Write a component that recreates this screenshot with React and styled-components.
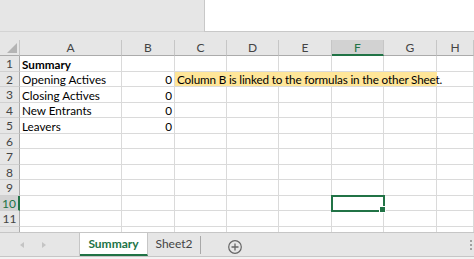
import styled, { createGlobalStyle } from "styled-components";

const GREEN = "#217346";
const GRID = "#dadada";
const HEAD_BG = "#e6e6e6";

const Global = createGlobalStyle`
  html, body { margin: 0; padding: 0; background: #ffffff; }
  body { font-family: Lato, "Liberation Sans", sans-serif; }
`;

const Window = styled.div`
  width: 474px;
  height: 259px;
  overflow: hidden;
  display: flex;
  flex-direction: column;
  background: ${HEAD_BG};
`;

const TopBar = styled.div`
  height: 40px;
  display: flex;
  align-items: flex-start;
`;

const TopFill = styled.div`
  width: 204px;
  height: 32px;
  border-bottom: 1px solid #d4d4d4;
  box-sizing: border-box;
`;

const NameBox = styled.div`
  flex: 1;
  height: 32px;
  background: #ffffff;
  border-left: 1px solid #c8c8c8;
  border-bottom: 1px solid #c8c8c8;
  box-sizing: border-box;
`;

const Sheet = styled.div`
  height: 192px;
  overflow: hidden;
  display: grid;
  grid-template-columns: 20px 102px 53px 52px 52px 53px 52px 53px 1fr;
  grid-template-rows: 16px repeat(6, 16px 15px);
  background: #ffffff;
`;

const ColHead = styled.div`
  display: flex;
  align-items: center;
  justify-content: center;
  font-size: 12px;
  color: ${(p) => (p.$active ? GREEN : "#444")};
  background: ${(p) => (p.$active ? "#d2d2d2" : HEAD_BG)};
  border-right: 1px solid #c6c6c6;
  border-bottom: ${(p) => (p.$active ? `2px solid ${GREEN}` : "1px solid #ababab")};
  box-sizing: border-box;
`;

const Corner = styled.div`
  background: ${HEAD_BG};
  border-right: 1px solid #c6c6c6;
  border-bottom: 1px solid #ababab;
  box-sizing: border-box;
  position: relative;
  &::after {
    content: "";
    position: absolute;
    right: 2px;
    bottom: 2px;
    border-style: solid;
    border-width: 0 0 10px 10px;
    border-color: transparent transparent #b4b4b4 transparent;
  }
`;

const RowHead = styled.div`
  display: flex;
  align-items: center;
  justify-content: center;
  font-size: 12px;
  color: ${(p) => (p.$active ? GREEN : "#444")};
  background: ${(p) => (p.$active ? "#d2d2d2" : HEAD_BG)};
  border-right: ${(p) => (p.$active ? `2px solid ${GREEN}` : "1px solid #ababab")};
  border-bottom: 1px solid #d0d0d0;
  box-sizing: border-box;
`;

const Cell = styled.div`
  display: flex;
  align-items: center;
  justify-content: ${(p) => (p.$num ? "flex-end" : "flex-start")};
  padding: 0 2px;
  font-size: 11.7px;
  font-weight: ${(p) => (p.$bold ? 700 : 400)};
  color: #000;
  white-space: nowrap;
  border-right: 1px solid ${GRID};
  border-bottom: 1px solid ${GRID};
  box-sizing: border-box;
  position: relative;
  ${(p) =>
    p.$selected &&
    `
    outline: 2px solid ${GREEN};
    outline-offset: -1px;
    z-index: 1;
    &::after {
      content: "";
      position: absolute;
      right: -3px;
      bottom: -3px;
      width: 5px;
      height: 5px;
      background: ${GREEN};
      border: 1px solid #fff;
    }
  `}
`;

const NoteCell = styled(Cell)`
  grid-column: 4 / span 6;
  letter-spacing: -0.15px;
  background: linear-gradient(to right, #ffe699 0, #ffe699 262px, #ffffff 262px);
`;

const TabBar = styled.div`
  height: 23px;
  display: flex;
  align-items: stretch;
  background: ${HEAD_BG};
  border-top: 1px solid #c6c6c6;
  border-bottom: 1px solid #c6c6c6;
`;

const Nav = styled.div`
  width: 80px;
  display: flex;
  align-items: center;
  gap: 18px;
  padding-left: 20px;
  box-sizing: border-box;
  border-right: 1px solid #c6c6c6;
`;

const Arrow = styled.span`
  width: 0;
  height: 0;
  border-top: 3px solid transparent;
  border-bottom: 3px solid transparent;
  ${(p) =>
    p.$dir === "left"
      ? "border-right: 4px solid #c4c4c4;"
      : "border-left: 4px solid #c4c4c4;"}
`;

const Tab = styled.div`
  width: ${(p) => p.$w}px;
  display: flex;
  align-items: center;
  justify-content: center;
  font-size: 12px;
  box-sizing: border-box;
  font-weight: ${(p) => (p.$active ? 700 : 400)};
  color: ${(p) => (p.$active ? GREEN : "#444")};
  background: ${(p) => (p.$active ? "#ffffff" : "transparent")};
  border-bottom: ${(p) => (p.$active ? `2px solid ${GREEN}` : "2px solid transparent")};
  ${(p) => p.$active && "border-right: 1px solid #c6c6c6;"}
`;

const TabSep = styled.div`
  width: 1px;
  margin: 3px 0 2px;
  background: #a8a8a8;
`;

const AddBtn = styled.div`
  width: 14px;
  height: 14px;
  margin: auto 0 auto 27px;
`;

const Dots = styled.div`
  margin-left: auto;
  margin-right: 2px;
  display: flex;
  flex-direction: column;
  justify-content: center;
  gap: 2px;
  span {
    width: 2px;
    height: 2px;
    background: #a0a0a0;
  }
`;

const StatusBar = styled.div`
  flex: 1;
  background: #f3f3f3;
`;

const cols = ["A", "B", "C", "D", "E", "F", "G", "H"];

const rows = [
  { a: "Summary", bold: true },
  { a: "Opening Actives", b: "0", note: "Column B is linked to the formulas in the other Sheet." },
  { a: "Closing Actives", b: "0" },
  { a: "New Entrants", b: "0" },
  { a: "Leavers", b: "0" },
  {},
  {},
  {},
  {},
  {},
  {},
  { hidden: true },
];

function Row({ n, row }) {
  const active = n === 10;
  return (
    <>
      <RowHead $active={active}>{row.hidden ? "" : n}</RowHead>
      <Cell $bold={row.bold}>{row.a}</Cell>
      <Cell $num>{row.b}</Cell>
      {row.note ? (
        <NoteCell>{row.note}</NoteCell>
      ) : (
        cols.slice(2).map((c) => <Cell key={c} $selected={active && c === "F"} />)
      )}
    </>
  );
}

export default function App() {
  return (
    <>
      <Global />
      <Window>
        <TopBar>
          <TopFill />
          <NameBox />
        </TopBar>
        <Sheet>
          <Corner />
          {cols.map((c) => (
            <ColHead key={c} $active={c === "F"}>
              {c}
            </ColHead>
          ))}
          {rows.map((row, i) => (
            <Row key={i} n={i + 1} row={row} />
          ))}
        </Sheet>
        <TabBar>
          <Nav>
            <Arrow $dir="left" />
            <Arrow $dir="right" />
          </Nav>
          <Tab $active $w={68}>Summary</Tab>
          <Tab $w={52}>Sheet2</Tab>
          <TabSep />
          <AddBtn>
            <svg width="14" height="14" viewBox="0 0 14 14">
              <circle cx="7" cy="7" r="6.3" fill="none" stroke="#666" strokeWidth="1.2" />
              <path d="M7 3.5v7M3.5 7h7" stroke="#666" strokeWidth="1.3" />
            </svg>
          </AddBtn>
          <Dots>
            <span />
            <span />
            <span />
          </Dots>
        </TabBar>
        <StatusBar />
      </Window>
    </>
  );
}
